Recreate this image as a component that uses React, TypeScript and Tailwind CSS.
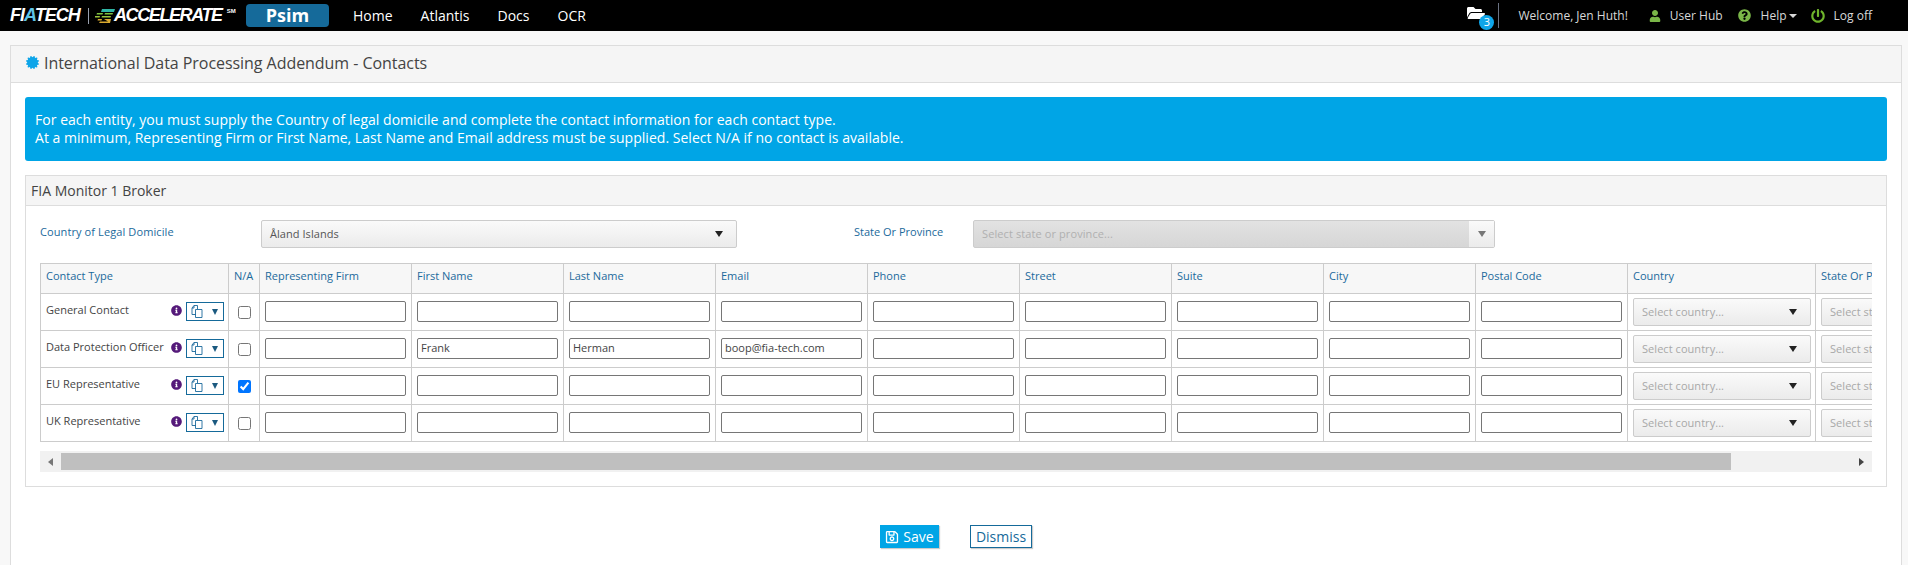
import { FaCertificate, FaFolderOpen, FaInfoCircle, FaPowerOff, FaQuestionCircle, FaRegSave, FaUser } from "react-icons/fa";

const font = "font-['Open_Sans',sans-serif]";

const inputCols = ["Representing Firm", "First Name", "Last Name", "Email", "Phone", "Street", "Suite", "City", "Postal Code"];

const rows = [
  { label: "General Contact", checked: false, values: {} as Record<string, string> },
  { label: "Data Protection Officer", checked: false, values: { "First Name": "Frank", "Last Name": "Herman", Email: "boop@fia-tech.com" } as Record<string, string> },
  { label: "EU Representative", checked: true, values: {} as Record<string, string> },
  { label: "UK Representative", checked: false, values: {} as Record<string, string> },
];

function Logo() {
  return (
    <div className="flex items-center w-[246px] pl-[10px] shrink-0 text-white italic font-bold font-['Liberation_Sans',sans-serif]">
      <span className="text-[18px] tracking-[-1px] w-[72px] shrink-0">
        FI<span className="text-[#5fc4e8]">A</span>TECH
      </span>
      <span className="w-px h-[16px] bg-gray-400 mx-[6px] shrink-0" />
      <svg width="20" height="14" viewBox="0 0 20 14" className="shrink-0">
        <path d="M7 0h13l-1 3H6z" fill="#2fb5a5" />
        <path d="M2 4h6l-.5 1.5H1.5zM10 4h8l-.5 1.5H9.5z" fill="#7fc241" />
        <path d="M0 7h5l-.5 1.5H0zM7 7h9l-.5 1.5H6.5z" fill="#9ac63c" />
        <path d="M3 10h4l-.5 1.5H2.5zM9 10h7l-1 4H4l1-1.5h8z" fill="#d9a92e" />
      </svg>
      <span className="text-[18px] tracking-[-1.4px] ml-[-1px] shrink-0">ACCELERATE</span>
      <span className="text-[6px] ml-[5px] mb-[8px] not-italic shrink-0">SM</span>
    </div>
  );
}

function NavBar() {
  return (
    <nav className="h-[31px] bg-black flex items-center text-white text-[14px] shrink-0">
      <Logo />
      <div className="w-[83px] h-[23px] bg-[#156a9a] rounded-[4px] flex items-center justify-center font-bold text-[18px] shrink-0">Psim</div>
      <div className="flex items-center gap-[28px] ml-[24px]">
        <span>Home</span>
        <span>Atlantis</span>
        <span>Docs</span>
        <span>OCR</span>
      </div>
      <div className="ml-auto flex items-center h-full text-[12px] text-[#d8d8d8] pr-[36px]">
        <div className="relative h-full flex items-center">
          <FaFolderOpen className="text-white text-[18px] mb-[6px]" />
          <span className="absolute left-[12px] top-[15px] w-[15px] h-[15px] rounded-full bg-[#0ea5e9] text-white text-[11px] flex items-center justify-center">3</span>
        </div>
        <span className="w-px h-[25px] bg-gray-500 ml-[13px] mr-[19px]" />
        <span>Welcome, Jen Huth!</span>
        <FaUser className="text-[#7ab648] text-[12px] ml-[21px] mr-[9px]" />
        <span>User Hub</span>
        <FaQuestionCircle className="text-[#7ab648] text-[13px] ml-[15px] mr-[10px]" />
        <span>Help</span>
        <span className="ml-[2px] mr-[14px] border-x-[4px] border-x-transparent border-t-[4px] border-t-[#d8d8d8]" />
        <FaPowerOff className="text-[#6fb52c] text-[14px] mr-[9px]" />
        <span>Log off</span>
      </div>
    </nav>
  );
}

function Caret({ className }: { className: string }) {
  return <span className={`border-x-[4px] border-x-transparent border-t-[6px] ${className}`} />;
}

function FakeSelect({ text, placeholder, width, height }: { text: string; placeholder?: boolean; width: string; height: string }) {
  return (
    <div className={`${width} ${height} shrink-0 border border-[#ccc] rounded-[2px] bg-gradient-to-b from-[#fafafa] to-[#ebebeb] flex items-center justify-between pl-[8px] pr-[13px] text-[11px]`}>
      <span className={`pt-px tracking-[0.05px] ${placeholder ? "text-[#a8a8a8]" : "text-[#555]"}`}>{text}</span>
      <Caret className="border-t-[#222]" />
    </div>
  );
}

function HeaderCell({ w, children }: { w: string; children: React.ReactNode }) {
  return (
    <div className={`${w} shrink-0 h-full border-r border-[#ccc] px-[5px] pt-[4px] text-[#1b6a9c] whitespace-nowrap overflow-hidden`}>{children}</div>
  );
}

function TextInput({ value }: { value?: string }) {
  return (
    <div className="w-[141px] h-[21px] border border-[#767676] rounded-[2px] bg-white px-[3px] flex items-center text-[11px] text-[#444] mt-[7px]">{value}</div>
  );
}

function CopyIcon() {
  return (
    <svg width="12" height="13" viewBox="0 0 12 13" fill="none" stroke="#1b6a9c" strokeWidth="0.9">
      <path d="M5 9.5H1V3l2-2.5h3.5V4" />
      <path d="M1 3h2V.5" />
      <path d="M4.5 4.5h6.5v8H4.5z" />
    </svg>
  );
}

function Row({ row }: { row: (typeof rows)[number] }) {
  return (
    <div className="flex h-[37px] border-b border-[#ccc]">
      <div className="w-[188px] shrink-0 border-r border-[#ccc] flex pl-[5px] pr-[4px] pt-[8px] text-[#444]">
        <span className="whitespace-nowrap leading-[20px] mt-[-2px]">{row.label}</span>
        <div className="ml-auto flex items-start shrink-0">
          <FaInfoCircle className="text-[#551a7a] text-[11px] mt-[3px] mr-[4px]" />
          <div className="w-[38px] h-[19px] border border-[#156a9a] flex items-center justify-between pl-[4px] pr-[5px]">
            <CopyIcon />
            <span className="border-x-[3.5px] border-x-transparent border-t-[6px] border-t-[#1b5a80]" />
          </div>
        </div>
      </div>
      <div className="w-[31px] shrink-0 border-r border-[#ccc] flex justify-center pt-[12px]">
        <input type="checkbox" defaultChecked={row.checked} className="w-[13px] h-[13px] m-0" />
      </div>
      {inputCols.map((c) => (
        <div key={c} className="w-[152px] shrink-0 border-r border-[#ccc] pl-[5px]">
          <TextInput value={row.values[c]} />
        </div>
      ))}
      <div className="w-[188px] shrink-0 border-r border-[#ccc] pl-[5px] pt-[4px]">
        <FakeSelect text="Select country..." placeholder width="w-[178px]" height="h-[28px]" />
      </div>
      <div className="w-[188px] shrink-0 pl-[5px] pt-[4px]">
        <FakeSelect text="Select state or province..." placeholder width="w-[178px]" height="h-[28px]" />
      </div>
    </div>
  );
}

function ContactTable() {
  return (
    <div className="mx-[14px] mt-[15px]">
      <div className="overflow-hidden">
        <div className="w-[2100px] text-[11px] border-l border-[#ccc]">
          <div className="flex h-[31px] bg-[#f7f7f7] border-y border-[#ccc]">
            <HeaderCell w="w-[188px]">Contact Type</HeaderCell>
            <HeaderCell w="w-[31px]">N/A</HeaderCell>
            {inputCols.map((c) => (
              <HeaderCell key={c} w="w-[152px]">{c}</HeaderCell>
            ))}
            <HeaderCell w="w-[188px]">Country</HeaderCell>
            <HeaderCell w="w-[188px]">State Or Province</HeaderCell>
          </div>
          {rows.map((r) => (
            <Row key={r.label} row={r} />
          ))}
        </div>
      </div>
      <div className="mt-[9px] h-[21px] bg-[#f1f1f1] flex items-center">
        <div className="w-[21px] flex justify-center shrink-0">
          <span className="border-y-[4.5px] border-y-transparent border-r-[5px] border-r-[#777]" />
        </div>
        <div className="h-[17px] w-[1670px] bg-[#bfbfbf] shrink-0" />
        <div className="ml-auto w-[21px] flex justify-center shrink-0">
          <span className="border-y-[4.5px] border-y-transparent border-l-[5px] border-l-[#444]" />
        </div>
      </div>
    </div>
  );
}

export default function App() {
  return (
    <div className={`${font} h-[565px] w-full overflow-hidden flex flex-col bg-[#f8f8f8] text-[#444]`}>
      <NavBar />
      <main className="flex-1 min-h-0 pt-[14px] pl-[10px] pr-[6px]">
        <section className="h-[540px] border border-[#ddd] bg-white flex flex-col">
          <header className="h-[37px] bg-[#f5f5f5] border-b border-[#ddd] flex items-center pl-[15px] text-[16px] tracking-[-0.05px] text-[#444] shrink-0 pb-[3px]">
            <FaCertificate className="text-[#0ea5e9] text-[13px] mr-[5px]" />
            International Data Processing Addendum - Contacts
          </header>
          <div className="px-[14px] pt-[14px]">
            <div className="h-[64px] rounded-[3px] bg-[#00a5e6] text-white text-[14px] tracking-[0.03px] leading-[18px] px-[10px] pb-px flex flex-col justify-center">
              <p>For each entity, you must supply the Country of legal domicile and complete the contact information for each contact type.</p>
              <p>At a minimum, Representing Firm or First Name, Last Name and Email address must be supplied. Select N/A if no contact is available.</p>
            </div>
            <div className="mt-[14px] h-[312px] border border-[#ddd]">
              <div className="h-[30px] bg-[#f5f5f5] border-b border-[#ddd] flex items-center pl-[5px] text-[14px] text-[#444]">FIA Monitor 1 Broker</div>
              <div className="flex items-center h-[28px] mt-[14px] text-[11px] text-[#1b6a9c]">
                <span className="ml-[14px] w-[221px] shrink-0 mb-[4px] tracking-[0.1px]">Country of Legal Domicile</span>
                <FakeSelect text="Åland Islands" width="w-[476px]" height="h-[28px]" />
                <span className="ml-[117px] w-[119px] shrink-0 mb-[4px]">State Or Province</span>
                <div className="w-[522px] h-[28px] shrink-0 border border-[#ccc] rounded-[2px] bg-gradient-to-b from-[#e2e2e2] to-[#d6d6d6] flex items-center justify-between pl-[8px] text-[#b0b0b0]">
                  <span className="tracking-[0.1px]">Select state or province...</span>
                  <span className="w-[25px] h-full bg-gradient-to-b from-[#fafafa] to-[#ebebeb] flex items-center justify-center shrink-0">
                    <Caret className="border-t-[#777]" />
                  </span>
                </div>
              </div>
              <ContactTable />
            </div>
            <div className="flex items-center mt-[38px] text-[14px] pl-[855px]">
              <button className="w-[59px] h-[23px] bg-[#00a5e6] text-white flex items-center justify-center gap-[4px] shadow-[1px_1px_1px_#ccc]">
                <FaRegSave className="text-[14px]" />
                Save
              </button>
              <button className="w-[62px] h-[23px] ml-[31px] border border-[#156a9a] text-[#156a9a] flex items-center justify-center shadow-[1px_1px_1px_#ccc]">Dismiss</button>
            </div>
          </div>
        </section>
      </main>
    </div>
  );
}
